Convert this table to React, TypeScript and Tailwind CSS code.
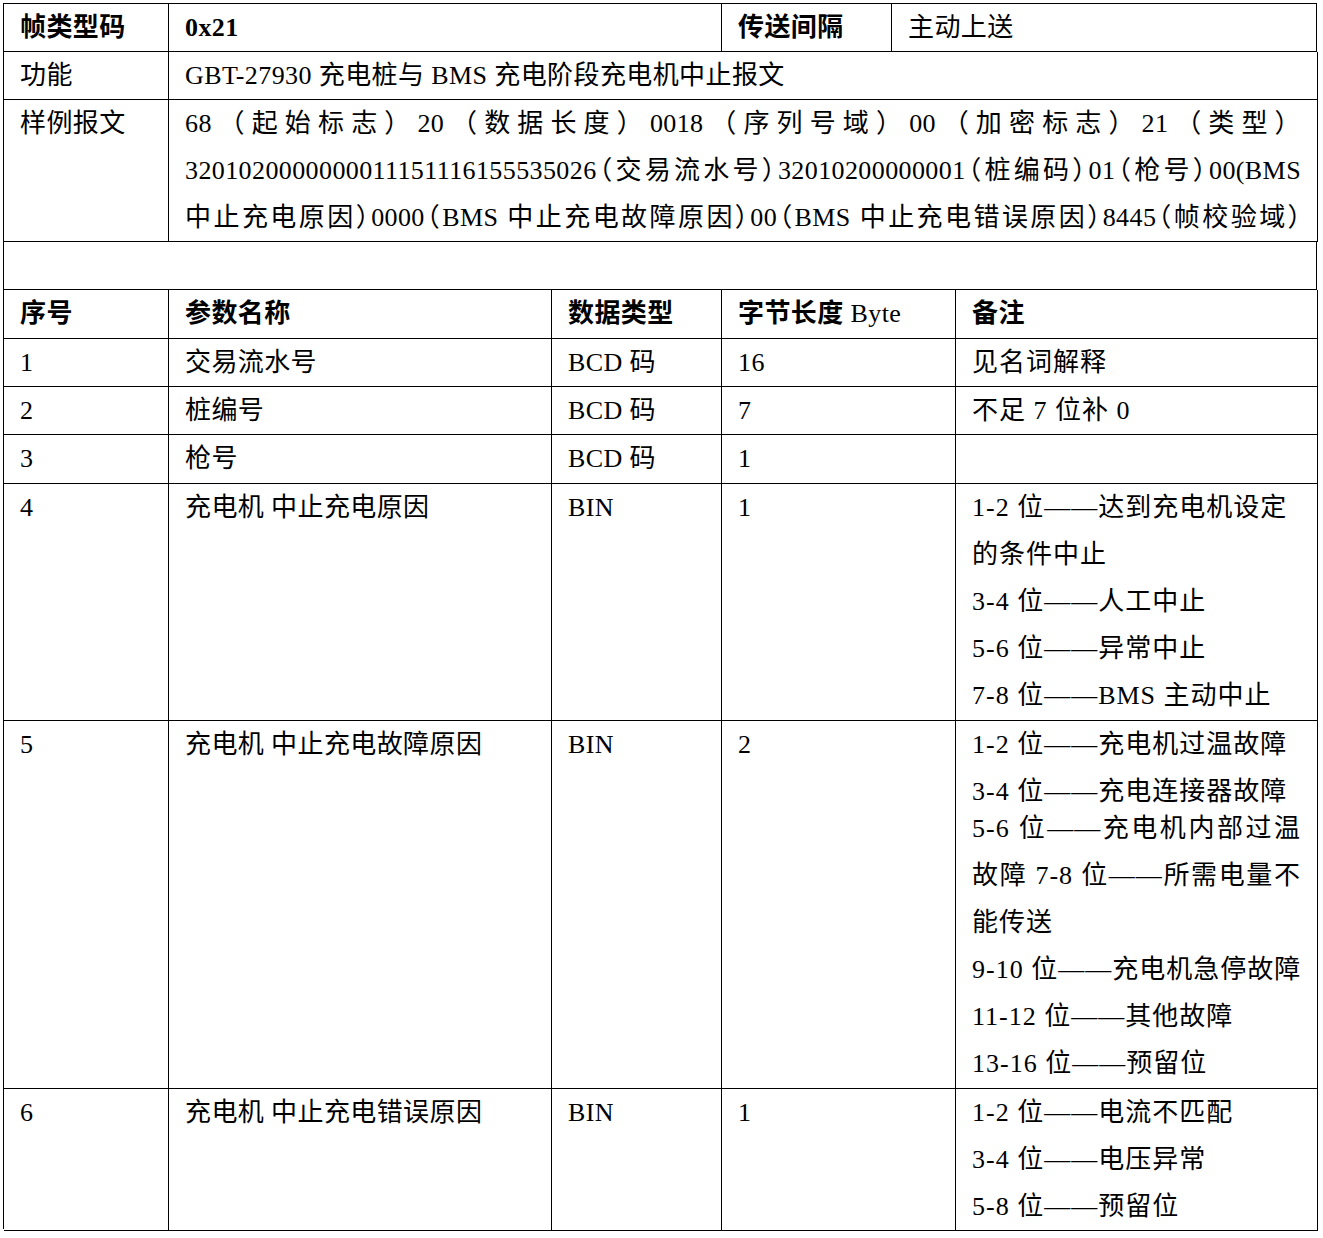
import React from 'react';

const font = "font-['Liberation_Serif','Noto_Sans_CJK_SC',serif]";
const cell = 'border-r border-b border-black px-4 leading-[47px]';
const just = 'text-justify [text-align-last:justify]';
// half-width punctuation so the long sample lines fit, as the original compresses them
const halt = "[font-feature-settings:'halt']";

type Param = {
    no: string;
    name: string;
    type: string;
    len: string;
    notes: React.ReactNode;
    h: string;
};

// remarks column, one div per printed line
const Line = ({ children, j = false, className = '' }: { children: React.ReactNode; j?: boolean; className?: string }) => (
    <div className={`whitespace-nowrap tracking-[1px] ${j ? just : ''} ${className}`}>{children}</div>
);

const params: Param[] = [
    { no: '1', name: '交易流水号', type: 'BCD 码', len: '16', notes: <Line>见名词解释</Line>, h: 'h-[48px]' },
    { no: '2', name: '桩编号', type: 'BCD 码', len: '7', notes: <Line>不足 7 位补 0</Line>, h: 'h-[48px]' },
    { no: '3', name: '枪号', type: 'BCD 码', len: '1', notes: null, h: 'h-[49px]' },
    {
        no: '4',
        name: '充电机 中止充电原因',
        type: 'BIN',
        len: '1',
        h: 'h-[237px]',
        notes: (
            <>
                <Line>1-2 位——达到充电机设定</Line>
                <Line>的条件中止</Line>
                <Line>3-4 位——人工中止</Line>
                <Line>5-6 位——异常中止</Line>
                <Line>7-8 位——BMS 主动中止</Line>
            </>
        ),
    },
    {
        no: '5',
        name: '充电机 中止充电故障原因',
        type: 'BIN',
        len: '2',
        h: 'h-[368px]',
        notes: (
            <>
                <Line>1-2 位——充电机过温故障</Line>
                <Line>3-4 位——充电连接器故障</Line>
                <Line j className="-mt-[10px]">5-6 位——充电机内部过温</Line>
                <Line j>故障 7-8 位——所需电量不</Line>
                <Line>能传送</Line>
                <Line j>9-10 位——充电机急停故障</Line>
                <Line>11-12 位——其他故障</Line>
                <Line>13-16 位——预留位</Line>
            </>
        ),
    },
    {
        no: '6',
        name: '充电机 中止充电错误原因',
        type: 'BIN',
        len: '1',
        h: 'h-[140px]',
        notes: (
            <>
                <Line>1-2 位——电流不匹配</Line>
                <Line>3-4 位——电压异常</Line>
                <Line>5-8 位——预留位</Line>
            </>
        ),
    },
];

export default function App() {
    return (
        <div className={`min-h-screen bg-white text-black pl-[3px] pt-[3px] text-[26px] tracking-[0.4px] ${font}`}>
            <div className="w-[1314px] border-l border-t border-black">
                {/* frame header */}
                <div className="grid grid-cols-[165px_553px_170px_425px] h-[48px]">
                    <div className={`${cell} font-bold`}>帧类型码</div>
                    <div className={`${cell} font-bold`}>0x21</div>
                    <div className={`${cell} font-bold`}>传送间隔</div>
                    <div className={cell}>主动上送</div>
                </div>
                <div className="grid grid-cols-[165px_1149px] h-[48px]">
                    <div className={cell}>功能</div>
                    <div className={cell}>GBT-27930 充电桩与 BMS 充电阶段充电机中止报文</div>
                </div>
                <div className="grid grid-cols-[165px_1149px] h-[142px]">
                    <div className={cell}>样例报文</div>
                    <div className={`${cell} overflow-hidden`}>
                        <div className={just}>68（起始标志）20（数据长度）0018（序列号域）00（加密标志）21（类型）</div>
                        <div className={`${just} ${halt}`}>
                            3201020000000011151116155535026（交易流水号）32010200000001（桩编码）01（枪号）00(BMS
                        </div>
                        <div className={`${just} ${halt}`}>中止充电原因）0000（BMS 中止充电故障原因）00（BMS 中止充电错误原因）8445（帧校验域）</div>
                    </div>
                </div>
                <div className="h-[48px] border-r border-b border-black" />

                {/* parameter table */}
                <div className="grid grid-cols-[165px_383px_170px_234px_362px] h-[49px]">
                    <div className={`${cell} font-bold`}>序号</div>
                    <div className={`${cell} font-bold`}>参数名称</div>
                    <div className={`${cell} font-bold`}>数据类型</div>
                    <div className={cell}>
                        <span className="font-bold">字节长度</span> Byte
                    </div>
                    <div className={`${cell} font-bold`}>备注</div>
                </div>
                {params.map((p) => (
                    <div key={p.no} className={`grid grid-cols-[165px_383px_170px_234px_362px] ${p.h}`}>
                        <div className={cell}>{p.no}</div>
                        <div className={cell}>{p.name}</div>
                        <div className={cell}>{p.type}</div>
                        <div className={cell}>{p.len}</div>
                        <div className={cell}>{p.notes}</div>
                    </div>
                ))}
            </div>
        </div>
    );
}
